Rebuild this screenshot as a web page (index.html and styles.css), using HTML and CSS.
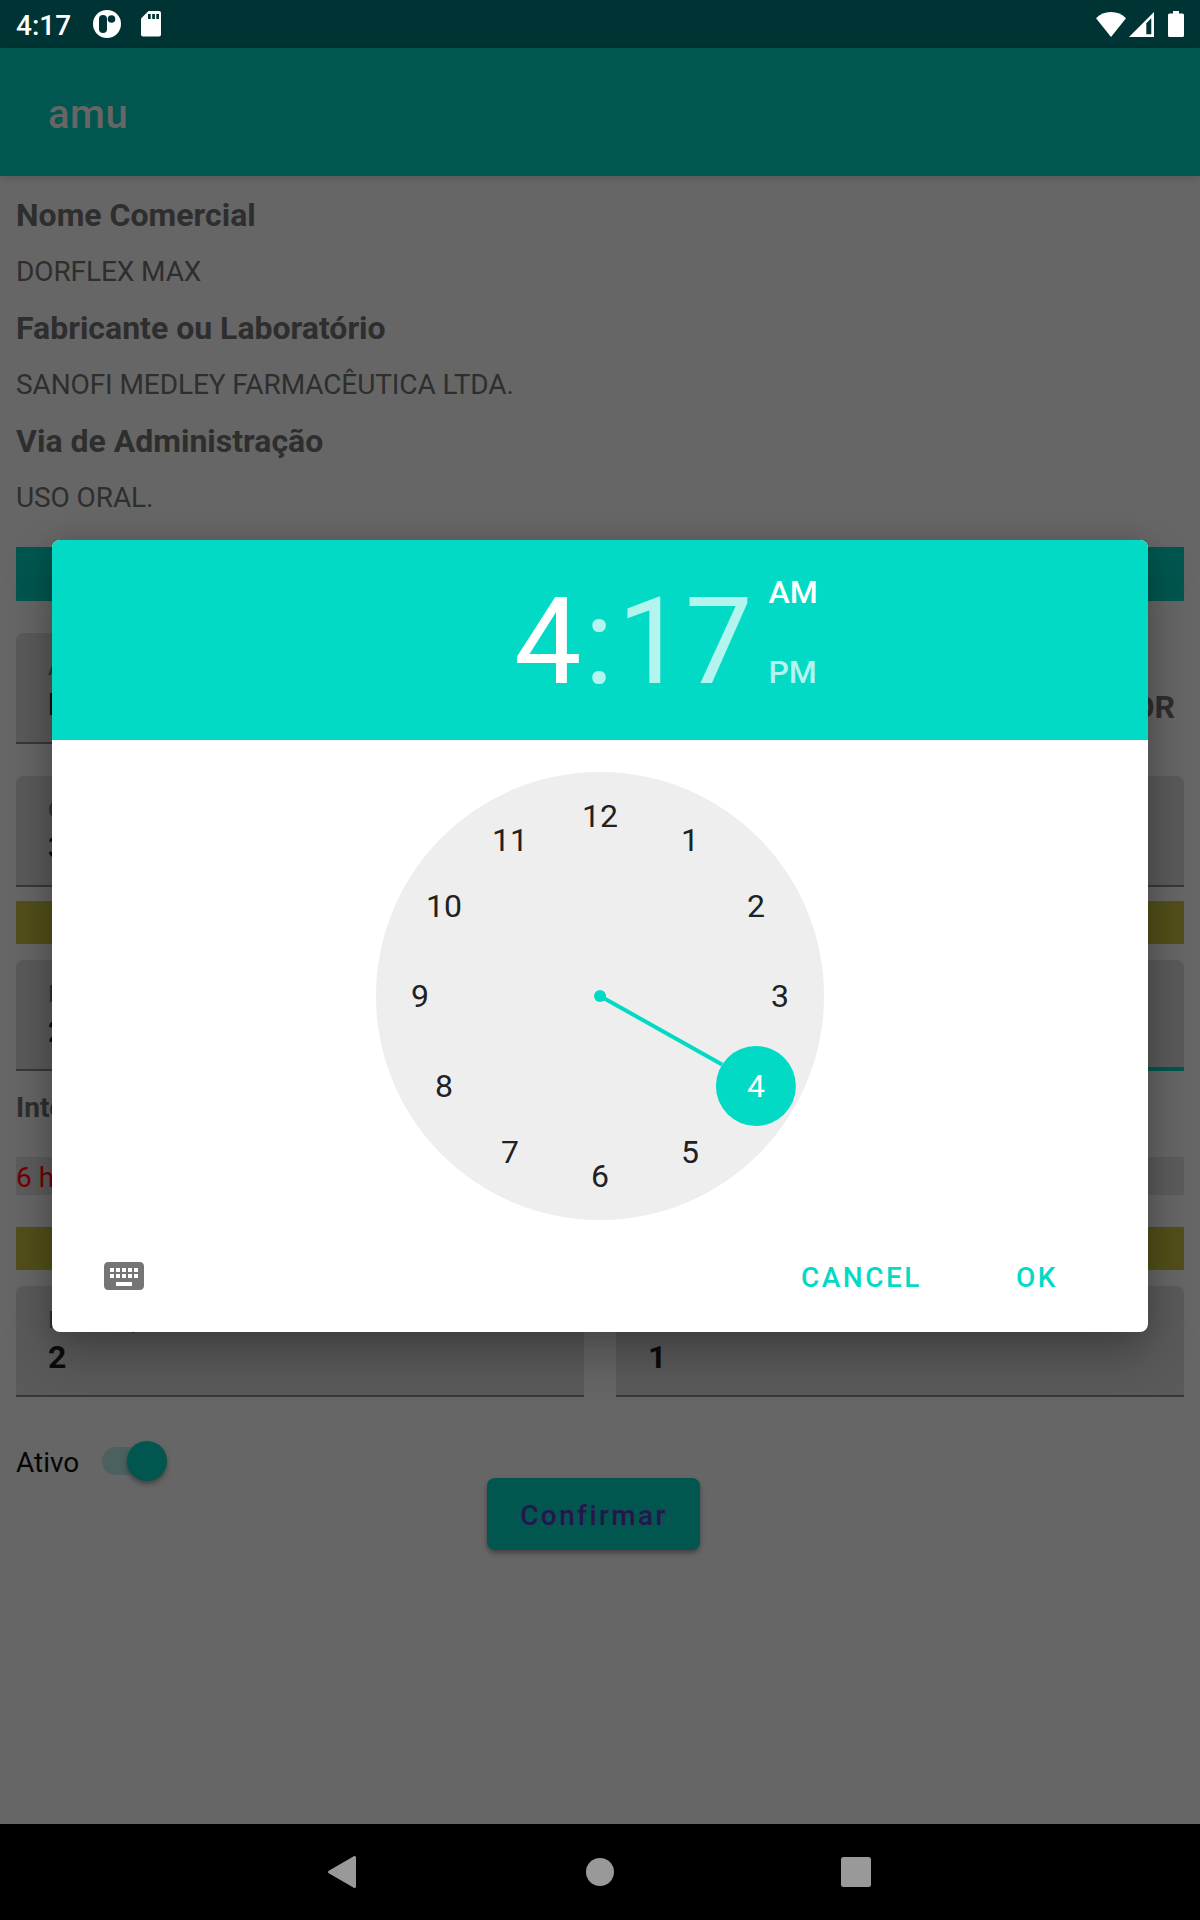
FILE: index.html
```html
<!DOCTYPE html>
<html lang="pt-BR">
<head>
<meta charset="utf-8">
<title>amu</title>
<link rel="stylesheet" href="styles.css">
</head>
<body>
<div class="screen">
  <header class="status">
    <span class="status-time">4:17</span>
    <svg class="ic-app" width="28" height="28" viewBox="0 0 28 28"><circle cx="14" cy="14" r="14" fill="#fff"/><rect x="6" y="5" width="8" height="18" rx="4" fill="#003434"/><circle cx="18.500" cy="9" r="3.800" fill="#003434"/></svg>
    <svg class="ic-sd" width="20" height="26" viewBox="0 0 20 26"><path d="M7.500 0H18a2 2 0 0 1 2 2v21.500a2 2 0 0 1-2 2H2a2 2 0 0 1-2-2V7.500z" fill="#fff"/><path d="M7 3h2.700v5H7zM11.200 3h2.700v5h-2.700zM15.300 3H18v5h-2.700z" fill="#003434"/></svg>
    <span class="spacer"></span>
    <svg class="ic-wifi" width="30" height="25" viewBox="0 0 30 25"><path d="M15 25L0 6.200C4 2.200 9 0 15 0s11 2.200 15 6.200z" fill="#fff"/></svg>
    <svg class="ic-signal" width="25" height="25" viewBox="0 0 25 25"><path fill-rule="evenodd" d="M25 0v25H0zM22.300 6.200L17.300 11.200V22.200h5z" fill="#fff"/></svg>
    <svg width="16" height="26" viewBox="0 0 16 26"><path d="M5 0h6v2.500h3.500A1.500 1.500 0 0 1 16 4v20.500a1.500 1.500 0 0 1-1.500 1.500h-13A1.500 1.500 0 0 1 0 24.500V4a1.500 1.500 0 0 1 1.500-1.500H5z" fill="#fff"/></svg>
  </header>
  <div class="appbar"><h1>amu</h1></div>
  <main class="content">
    <h2>Nome Comercial</h2>
    <p>DORFLEX MAX</p>
    <h2>Fabricante ou Laboratório</h2>
    <p>SANOFI MEDLEY FARMACÊUTICA LTDA.</p>
    <h2>Via de Administração</h2>
    <p>USO ORAL.</p>
    <div class="band teal"></div>
    <div class="row first">
      <div class="field"><label>A</label><b>D</b></div>
      <div class="unit">OR</div>
    </div>
    <div class="row second">
      <div class="field"><label>Q</label><b>3</b></div>
    </div>
    <div class="band olive"></div>
    <div class="row">
      <div class="field"><label>D</label><b>2</b></div>
      <div class="field focused"></div>
    </div>
    <h3>Intervalo</h3>
    <div class="interval">6 horas</div>
    <div class="band olive"></div>
    <div class="row">
      <div class="field"><label>Medicação</label><b>2</b></div>
      <div class="field"><label>D</label><b>1</b></div>
    </div>
    <div class="toggle-row"><span>Ativo</span><span class="switch"><i></i></span></div>
    <button class="confirm">Confirmar</button>
  </main>
  <nav class="navbar">
    <svg width="96" height="96" viewBox="0 0 96 96"><path d="M58.500 33.500v29L33.500 48z" fill="#999" stroke="#999" stroke-width="3" stroke-linejoin="round"/></svg>
    <svg width="96" height="96" viewBox="0 0 96 96"><circle cx="48" cy="48" r="14" fill="#999"/></svg>
    <svg width="96" height="96" viewBox="0 0 96 96"><rect x="33" y="33" width="30" height="30" rx="2.500" fill="#999"/></svg>
  </nav>

  <section class="dialog">
    <div class="time-header">
      <span class="hour">4</span><span class="colon">:</span><span class="minute">17</span>
      <div class="ampm"><span class="am">AM</span><span class="pm">PM</span></div>
    </div>
    <svg class="clock" width="448" height="448" viewBox="-224 -224 448 448">
      <circle r="224" fill="#eee"/>
      <path d="M0 0L122 68.500" stroke="#03dac5" stroke-width="4"/>
      <circle r="6" fill="#03dac5"/>
      <circle cx="155.900" cy="90" r="40" fill="#03dac5"/>
      <g class="numbers">
        <text x="0" y="-169">12</text>
        <text x="90" y="-145">1</text>
        <text x="156" y="-79">2</text>
        <text x="180" y="11">3</text>
        <text x="156" y="101" class="selected">4</text>
        <text x="90" y="167">5</text>
        <text x="0" y="191">6</text>
        <text x="-90" y="167">7</text>
        <text x="-156" y="101">8</text>
        <text x="-180" y="11">9</text>
        <text x="-156" y="-79">10</text>
        <text x="-90" y="-145">11</text>
      </g>
    </svg>
    <div class="actions">
      <svg width="48" height="48" viewBox="0 0 24 24" fill="#757575"><path d="M20 5H4c-1.100 0-1.990.9-1.990 2L2 17c0 1.100.9 2 2 2h16c1.100 0 2-.9 2-2V7c0-1.100-.9-2-2-2zm-9 3h2v2h-2V8zm0 3h2v2h-2v-2zM8 8h2v2H8V8zm0 3h2v2H8v-2zm-1 2H5v-2h2v2zm0-3H5V8h2v2zm9 7H8v-2h8v2zm0-4h-2v-2h2v2zm0-3h-2V8h2v2zm3 3h-2v-2h2v2zm0-3h-2V8h2v2z"/></svg>
      <span class="cancel">CANCEL</span>
      <span class="ok">OK</span>
    </div>
  </section>
</div>
</body>
</html>
```
FILE: styles.css
```css
* { box-sizing: border-box; }
body, h1, h2, h3, p { margin: 0; }
body { font-family: Roboto, "Liberation Sans", sans-serif; background: #666; }
svg { display: block; flex: none; }

.screen { position: relative; width: 1200px; height: 1920px; display: flex; flex-direction: column; background: #666; overflow: hidden; }

.status { height: 48px; flex: none; display: flex; align-items: center; padding: 0 16px; background: #003434; color: #fff; }
.status-time { width: 77px; padding-top: 3px; font-size: 28px; font-weight: 500; line-height: 48px; }
.ic-sd { margin-left: 20px; }
.spacer { flex: 1; }
.ic-signal { margin: 0 14px 0 3px; }

.appbar { height: 128px; flex: none; padding-left: 48px; background: #01574f; color: #666; box-shadow: 0 2px 8px rgba(0, 0, 0, .15); }
.appbar h1 { font-size: 40px; font-weight: 500; line-height: 134px; letter-spacing: .5px; }

.content { flex: 1; display: flex; flex-direction: column; padding: 11px 16px 0; color: #2e2e2e; }
.content h2 { font-size: 32px; line-height: 56px; }
.content p { font-size: 28px; line-height: 57px; letter-spacing: -.1px; }

.band.teal { height: 54px; margin-top: 21px; background: #01574f; }
.band.olive { height: 43px; margin-bottom: 16px; background: #524f1b; }

.row { display: flex; gap: 32px; }
.row.first { margin: 32px 0; }
.row.second { margin-bottom: 14px; }
.field { flex: 1; height: 111px; padding: 20px 32px 0; border-radius: 8px 8px 0 0; background: linear-gradient(#383838, #383838) bottom / 100% 2px no-repeat #5a5a5a; display: flex; flex-direction: column; gap: 3px; }
.field.focused { background: linear-gradient(#01574f, #01574f) bottom / 100% 4px no-repeat #5a5a5a; }
.field label { font-size: 24px; line-height: 28px; }
.field b { font-size: 32px; line-height: 40px; color: #0b0b0b; }
.unit { width: 200px; padding: 54px 9px 0; font-size: 32px; font-weight: 700; line-height: 40px; text-align: right; }
.content h3 { margin-top: 17px; font-size: 28px; line-height: 40px; }
.interval { height: 38px; margin: 29px 0 32px; background: #5c5c5c; color: #740000; font-size: 28px; line-height: 42px; }

.toggle-row { height: 40px; margin-top: 44px; display: flex; align-items: center; gap: 23px; color: #050505; font-size: 28px; line-height: 46px; }
.switch { width: 65px; height: 28px; border-radius: 14px; background: linear-gradient(90deg, #4b615f 50px, transparent 50px); display: flex; align-items: center; justify-content: flex-end; }
.switch > i { width: 40px; height: 40px; flex: none; border-radius: 50%; background: #01574f; box-shadow: 0 3px 5px rgba(0, 0, 0, .35); }
.toggle-row > span:first-child { padding-top: 3px; }
.confirm { width: 213px; height: 72px; margin: -3px 0 0 471px; padding: 2px 0 0 1px; border: 0; border-radius: 8px; background: #01574f; color: #25164e; font: 500 28px Roboto, sans-serif; letter-spacing: 2.400px; box-shadow: 0 3px 5px rgba(0, 0, 0, .35); }

.navbar { height: 96px; flex: none; display: flex; justify-content: center; gap: 160px; background: #000; }

.dialog { position: absolute; left: 52px; top: 540px; width: 1096px; height: 792px; border-radius: 8px; overflow: hidden; background: #fff; box-shadow: 0 20px 48px rgba(0, 0, 0, .3), 0 0 20px rgba(0, 0, 0, .08); }
.time-header { height: 200px; padding-left: 462px; display: flex; background: #03dac5; color: #fff; font-size: 120px; line-height: 204px; }
.colon, .minute, .pm { color: #b3f4ee; }
.colon { margin-left: 3px; }
.minute { margin-left: 4px; }
.ampm { display: flex; flex-direction: column; padding-top: 12px; margin-left: 16px; font-size: 32px; font-weight: 500; line-height: 80px; }
.clock { margin: 32px auto 0; }
.numbers { font-size: 32px; fill: #212121; text-anchor: middle; }
.numbers .selected { fill: #fff; }
.actions { display: flex; align-items: center; margin-top: 30px; padding-left: 48px; color: #03dac5; font-size: 28px; font-weight: 500; line-height: 50px; letter-spacing: 2.500px; }
.actions span { padding-top: 3px; }
.actions svg { margin-top: -1px; }
.cancel { margin-left: 601px; width: 215px; padding-left: 52px; margin-right: 52px; }
```
